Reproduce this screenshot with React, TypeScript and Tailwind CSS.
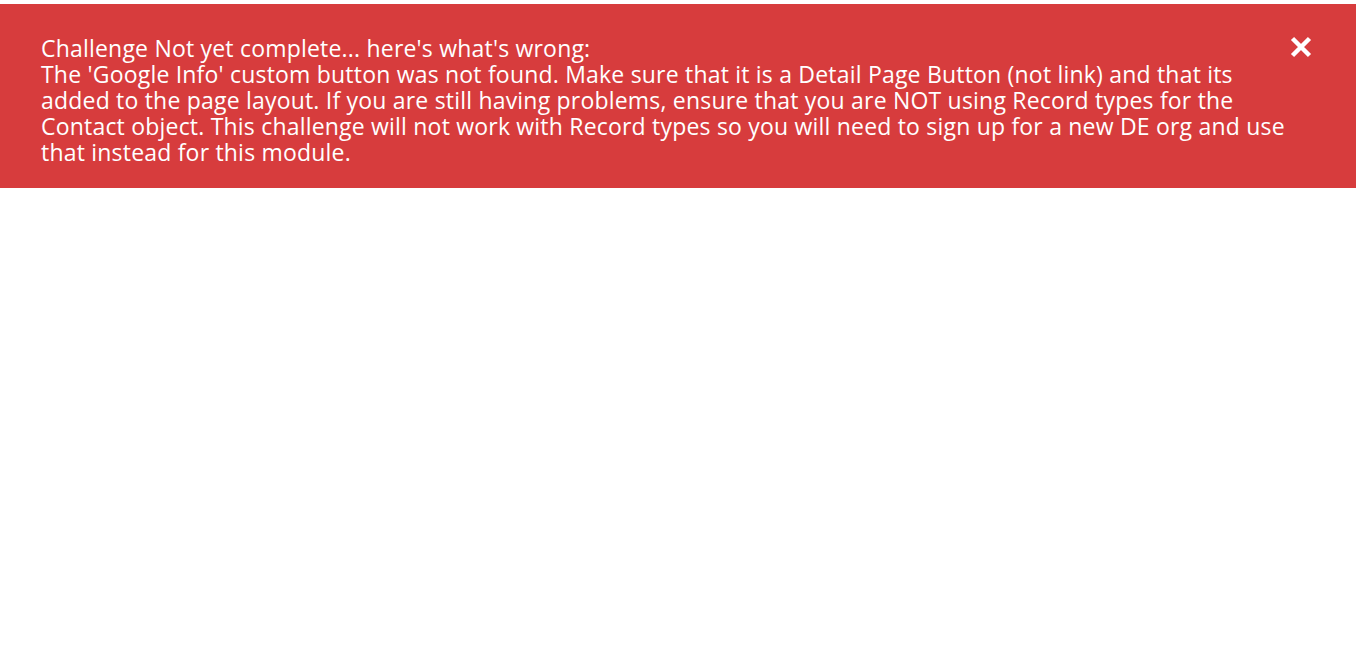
export default function App() {
  const lines = [
    "Challenge Not yet complete... here's what's wrong:",
    "The 'Google Info' custom button was not found. Make sure that it is a Detail Page Button (not link) and that its",
    'added to the page layout. If you are still having problems, ensure that you are NOT using Record types for the',
    'Contact object. This challenge will not work with Record types so you will need to sign up for a new DE org and use',
    'that instead for this module.',
  ]

  return (
    <div className="min-h-[648px] w-full bg-white pt-1">
      <div className="flex items-start justify-between bg-[#d73c3d] pl-[41px] pr-11 pt-[31px] pb-[23px] text-white">
        <p className="font-['Open_Sans',sans-serif] text-[23px] leading-[26px] tracking-[0.2px]">
          {lines.map((line) => (
            <span key={line} className="block whitespace-nowrap">
              {line}
            </span>
          ))}
        </p>
        <button type="button" aria-label="Close" className="mt-[1px] flex h-[22px] w-[22px] items-center justify-center">
          <svg viewBox="0 0 22 22" className="h-[22px] w-[22px]" fill="none" stroke="white" strokeWidth="4.5" strokeLinecap="butt">
            <path d="M2.5 2.5l17 17M19.5 2.5l-17 17" />
          </svg>
        </button>
      </div>
    </div>
  )
}
